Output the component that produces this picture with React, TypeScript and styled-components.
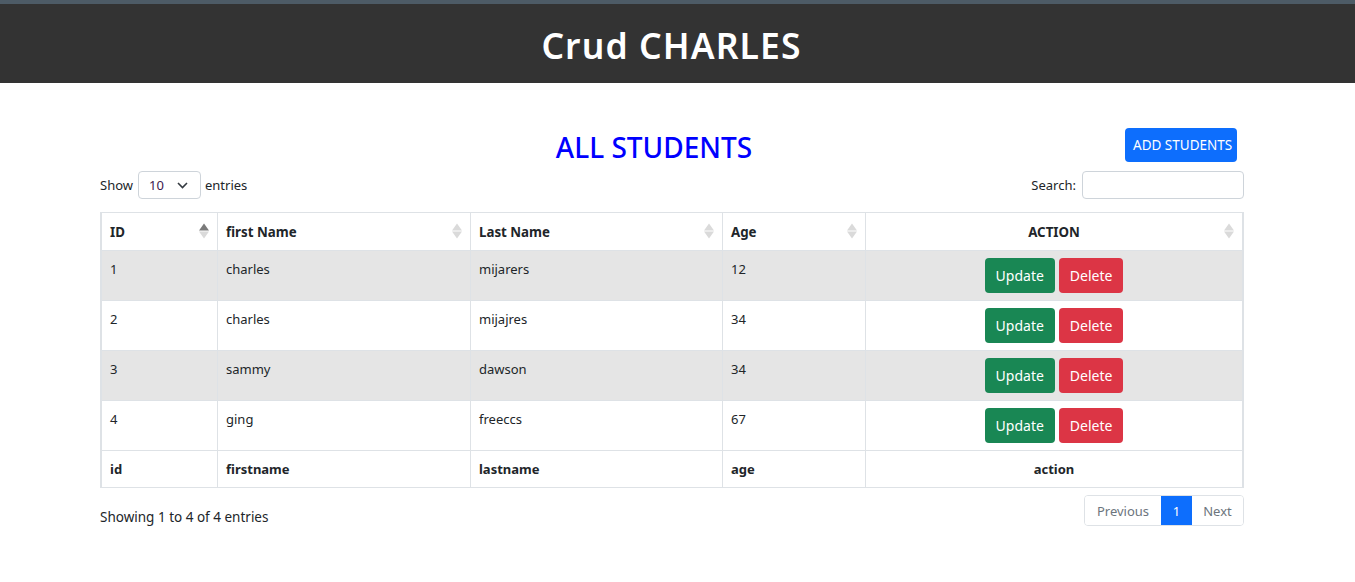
import React from "react";
import styled, { createGlobalStyle } from "styled-components";

const Global = createGlobalStyle`
  html, body { margin: 0; padding: 0; background: #fff; }
  body { font-family: "Noto Sans", "Open Sans", sans-serif; color: #212529; font-size: 14px; }
  * { box-sizing: border-box; }
`;

const TopLine = styled.div`
  height: 4px;
  background: #4d5b66;
`;

const Header = styled.header`
  height: 79px;
  background: #333333;
  display: flex;
  align-items: center;
  justify-content: center;
  padding-right: 12px;
`;

const Brand = styled.h1`
  margin: 0;
  color: #fff;
  font-size: 35.5px;
  font-weight: 600;
  letter-spacing: 1.1px;
  padding-top: 2px;
`;

const Container = styled.main`
  width: 1144px;
  margin-left: 100px;
  padding-top: 45px;
`;

const TitleRow = styled.div`
  display: flex;
  align-items: center;
  padding-right: 7px;
  height: 34px;
`;

const Title = styled.h2`
  flex: 1;
  margin: 0;
  padding-left: 83px;
  text-align: center;
  color: #0000ff;
  font-size: 28px;
  font-weight: 500;
  line-height: 34px;
  position: relative;
  top: 2px;
`;

const Button = styled.button<{ $variant: "primary" | "success" | "danger" }>`
  border: none;
  border-radius: 4px;
  color: #fff;
  font-family: inherit;
  font-size: 14px;
  cursor: pointer;
  background: ${(p) =>
    p.$variant === "primary" ? "#0d6efd" : p.$variant === "success" ? "#198754" : "#dc3545"};
`;

const AddButton = styled(Button)`
  height: 34px;
  width: 112px;
  padding: 0 0 0 8px;
  text-align: left;
  white-space: nowrap;
  overflow: hidden;
  font-size: 13.5px;
`;

const Controls = styled.div`
  display: flex;
  justify-content: space-between;
  align-items: center;
  margin-top: 9px;
  height: 28px;
`;

const Label = styled.label`
  display: flex;
  align-items: center;
  gap: 4px;
  font-size: 13px;
`;

const Select = styled.div`
  width: 63px;
  height: 28px;
  margin-left: 1px;
  border: 1px solid #ced4da;
  border-radius: 4px;
  display: flex;
  align-items: center;
  justify-content: space-between;
  padding: 0 12px 0 10px;
  font-size: 13px;
  color: #3d1a4f;
`;

const SearchInput = styled.input`
  width: 162px;
  height: 28px;
  border: 1px solid #ced4da;
  border-radius: 4px;
  margin-left: 2px;
`;

const TableWrap = styled.div`
  margin-top: 13px;
  border: 1px solid #dee2e6;
`;

const Table = styled.table`
  width: 100%;
  border-collapse: collapse;
  table-layout: fixed;
  font-size: 13px;
`;

const Th = styled.th<{ $center?: boolean }>`
  position: relative;
  height: 37px;
  padding: 2px 8px 0;
  border: 1px solid #dee2e6;
  border-top: none;
  text-align: ${(p) => (p.$center ? "center" : "left")};
  font-weight: 700;
  font-size: 13.3px;
`;

const SortIcon = styled.span`
  position: absolute;
  right: 8px;
  top: 50%;
  transform: translateY(-50%);
  display: flex;
  flex-direction: column;
  gap: 1px;
`;

const Tri = styled.span<{ $dir: "up" | "down"; $active?: boolean }>`
  width: 0;
  height: 0;
  border-left: 5px solid transparent;
  border-right: 5px solid transparent;
  ${(p) =>
    p.$dir === "up"
      ? `border-bottom: 7px solid ${p.$active ? "#7a7a7a" : "#dadada"};`
      : `border-top: 7px solid #dadada;`}
`;

const Tr = styled.tr<{ $striped?: boolean }>`
  background: ${(p) => (p.$striped ? "#e5e5e5" : "#fff")};
`;

const Td = styled.td<{ $center?: boolean }>`
  height: 50px;
  padding: 8px 8px 0;
  vertical-align: top;
  border: 1px solid #dee2e6;
  text-align: ${(p) => (p.$center ? "center" : "left")};
  line-height: 21px;
`;

const ActionTd = styled(Td)`
  padding-top: 7px;
`;

const FootTd = styled.td<{ $center?: boolean }>`
  height: 37px;
  padding: 0 8px;
  border: 1px solid #dee2e6;
  border-bottom: none;
  font-weight: 700;
  text-align: ${(p) => (p.$center ? "center" : "left")};
`;

const ActionGroup = styled.div`
  display: flex;
  justify-content: center;
  gap: 4px;
`;

const RowButton = styled(Button)`
  height: 35px;
  padding: 0 11px;
`;

const Bottom = styled.div`
  display: flex;
  justify-content: space-between;
  align-items: flex-start;
  margin-top: 7px;
`;

const Info = styled.div`
  padding-top: 13px;
  font-size: 13.5px;
`;

const Pager = styled.div`
  display: flex;
  height: 31px;
  border: 1px solid #dee2e6;
  border-radius: 4px;
  overflow: hidden;
  font-size: 13px;
`;

const PageItem = styled.div<{ $active?: boolean; $w: number }>`
  display: flex;
  align-items: center;
  justify-content: center;
  width: ${(p) => p.$w}px;
  color: ${(p) => (p.$active ? "#fff" : "#6c757d")};
  background: ${(p) => (p.$active ? "#0d6efd" : "#fff")};
`;

const students = [
  { id: 1, first: "charles", last: "mijarers", age: 12 },
  { id: 2, first: "charles", last: "mijajres", age: 34 },
  { id: 3, first: "sammy", last: "dawson", age: 34 },
  { id: 4, first: "ging", last: "freeccs", age: 67 },
];

const Sort = ({ active }: { active?: boolean }) => (
  <SortIcon>
    <Tri $dir="up" $active={active} />
    <Tri $dir="down" />
  </SortIcon>
);

export default function App() {
  return (
    <>
      <Global />
      <TopLine />
      <Header>
        <Brand>Crud CHARLES</Brand>
      </Header>
      <Container>
        <TitleRow>
          <Title>ALL STUDENTS</Title>
          <AddButton $variant="primary">ADD STUDENTS</AddButton>
        </TitleRow>
        <Controls>
          <Label>
            Show
            <Select>
              <span>10</span>
              <svg width="11" height="7" viewBox="0 0 11 7" fill="none">
                <path d="M1 1l4.5 4.5L10 1" stroke="#343a40" strokeWidth="1.6" />
              </svg>
            </Select>
            entries
          </Label>
          <Label>
            Search:
            <SearchInput />
          </Label>
        </Controls>
        <TableWrap>
          <Table>
            <colgroup>
              <col style={{ width: 116 }} />
              <col style={{ width: 253 }} />
              <col style={{ width: 252 }} />
              <col style={{ width: 143 }} />
              <col />
            </colgroup>
            <thead>
              <tr>
                <Th>ID<Sort active /></Th>
                <Th>first Name<Sort /></Th>
                <Th>Last Name<Sort /></Th>
                <Th>Age<Sort /></Th>
                <Th $center>ACTION<Sort /></Th>
              </tr>
            </thead>
            <tbody>
              {students.map((s, i) => (
                <Tr key={s.id} $striped={i % 2 === 0}>
                  <Td>{s.id}</Td>
                  <Td>{s.first}</Td>
                  <Td>{s.last}</Td>
                  <Td>{s.age}</Td>
                  <ActionTd $center>
                    <ActionGroup>
                      <RowButton $variant="success">Update</RowButton>
                      <RowButton $variant="danger">Delete</RowButton>
                    </ActionGroup>
                  </ActionTd>
                </Tr>
              ))}
            </tbody>
            <tfoot>
              <tr>
                <FootTd>id</FootTd>
                <FootTd>firstname</FootTd>
                <FootTd>lastname</FootTd>
                <FootTd>age</FootTd>
                <FootTd $center>action</FootTd>
              </tr>
            </tfoot>
          </Table>
        </TableWrap>
        <Bottom>
          <Info>Showing 1 to 4 of 4 entries</Info>
          <Pager>
            <PageItem $w={76}>Previous</PageItem>
            <PageItem $w={31} $active>1</PageItem>
            <PageItem $w={51}>Next</PageItem>
          </Pager>
        </Bottom>
      </Container>
    </>
  );
}
